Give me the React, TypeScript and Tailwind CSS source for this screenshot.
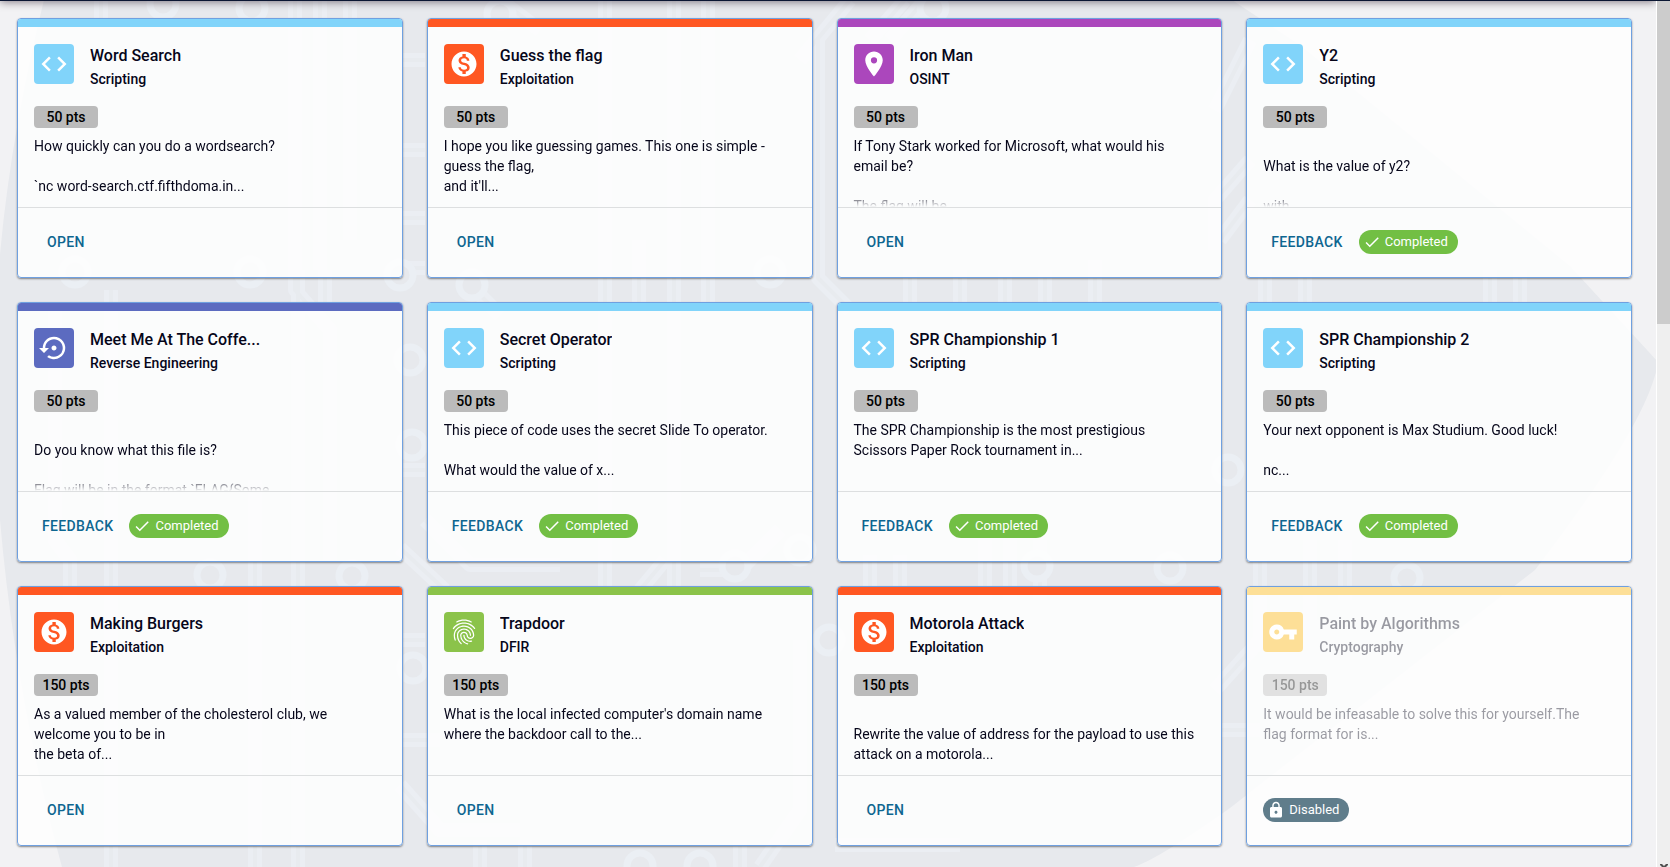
import type { ReactNode } from "react";
import type { IconType } from "react-icons";
import {
  MdCheck,
  MdCode,
  MdFingerprint,
  MdLock,
  MdMonetizationOn,
  MdPlace,
  MdSettingsBackupRestore,
  MdVpnKey,
} from "react-icons/md";

type Category =
  | "Scripting"
  | "Exploitation"
  | "OSINT"
  | "Reverse Engineering"
  | "DFIR"
  | "Cryptography";

type Status = "open" | "completed" | "disabled";

interface Challenge {
  title: string;
  category: Category;
  points: number;
  text: string;
  status: Status;
}

const categories: Record<Category, { color: string; icon: IconType }> = {
  Scripting: { color: "bg-[#81d4fa]", icon: MdCode },
  Exploitation: { color: "bg-[#ff5722]", icon: MdMonetizationOn },
  OSINT: { color: "bg-[#ab47bc]", icon: MdPlace },
  "Reverse Engineering": { color: "bg-[#5c6bc0]", icon: MdSettingsBackupRestore },
  DFIR: { color: "bg-[#8bc34a]", icon: MdFingerprint },
  Cryptography: { color: "bg-[#fddf97]", icon: MdVpnKey },
};

const challenges: Challenge[] = [
  {
    title: "Word Search",
    category: "Scripting",
    points: 50,
    text: "How quickly can you do a wordsearch?\n\n`nc word-search.ctf.fifthdoma.in...",
    status: "open",
  },
  {
    title: "Guess the flag",
    category: "Exploitation",
    points: 50,
    text: "I hope you like guessing games. This one is simple - guess the flag,\nand it'll...",
    status: "open",
  },
  {
    title: "Iron Man",
    category: "OSINT",
    points: 50,
    text: "If Tony Stark worked for Microsoft, what would his email be?\n\nThe flag will be",
    status: "open",
  },
  {
    title: "Y2",
    category: "Scripting",
    points: 50,
    text: "\nWhat is the value of y2?\n\nwith",
    status: "completed",
  },
  {
    title: "Meet Me At The Coffe...",
    category: "Reverse Engineering",
    points: 50,
    text: "\nDo you know what this file is?\n\nFlag will be in the format `FLAG{Some...",
    status: "completed",
  },
  {
    title: "Secret Operator",
    category: "Scripting",
    points: 50,
    text: "This piece of code uses the secret Slide To operator.\n\nWhat would the value of x...",
    status: "completed",
  },
  {
    title: "SPR Championship 1",
    category: "Scripting",
    points: 50,
    text: "The SPR Championship is the most prestigious Scissors Paper Rock tournament in...",
    status: "completed",
  },
  {
    title: "SPR Championship 2",
    category: "Scripting",
    points: 50,
    text: "Your next opponent is Max Studium. Good luck!\n\nnc...",
    status: "completed",
  },
  {
    title: "Making Burgers",
    category: "Exploitation",
    points: 150,
    text: "As a valued member of the cholesterol club, we welcome you to be in\nthe beta of...",
    status: "open",
  },
  {
    title: "Trapdoor",
    category: "DFIR",
    points: 150,
    text: "What is the local infected computer's domain name where the backdoor call to the...",
    status: "open",
  },
  {
    title: "Motorola Attack",
    category: "Exploitation",
    points: 150,
    text: "\nRewrite the value of address for the payload to use this attack on a motorola...",
    status: "open",
  },
  {
    title: "Paint by Algorithms",
    category: "Cryptography",
    points: 150,
    text: "It would be infeasable to solve this for yourself.The\nflag format for is...",
    status: "disabled",
  },
];

function ActionButton({ children }: { children: ReactNode }) {
  return (
    <button
      type="button"
      className="h-9 min-w-16 rounded px-2 text-sm font-medium uppercase tracking-wide text-[#0e6690] hover:bg-sky-50"
    >
      {children}
    </button>
  );
}

function Chip({ icon: Icon, color, children }: { icon: IconType; color: string; children: ReactNode }) {
  return (
    <span
      className={`inline-flex h-6 items-center gap-1 rounded-full pr-2.5 pl-1 text-[13px] text-white ${color}`}
    >
      <Icon size={18} aria-hidden />
      {children}
    </span>
  );
}

function ChallengeCard({ challenge }: { challenge: Challenge }) {
  const { title, category, points, text, status } = challenge;
  const { color, icon: Icon } = categories[category];
  const faded = status === "disabled" ? "opacity-40" : "";

  return (
    <article className="flex flex-col overflow-hidden rounded border border-[#6fa0e0] bg-white/85 shadow-[0_1px_2px_rgba(0,0,0,0.45)]">
      <div className={`h-2 ${color}`} />
      <header className="flex gap-4 px-4 pt-[17px]">
        <span className={`flex size-10 shrink-0 items-center justify-center rounded text-white ${color}`}>
          <Icon size={30} aria-hidden />
        </span>
        <div className={`min-w-0 ${faded}`}>
          <h2 className="truncate text-base font-medium leading-6">{title}</h2>
          <p className="text-sm font-medium leading-[22px]">{category}</p>
        </div>
      </header>
      <div className={`mt-4 px-4 ${faded}`}>
        <span className="flex h-[22px] w-16 items-center justify-center rounded bg-[#bbbbbb] text-sm font-medium text-black">
          {points} pts
        </span>
      </div>
      <p
        className={`mt-2 h-[71px] overflow-hidden whitespace-pre-line pr-[22px] pl-4 text-sm leading-5 [mask-image:linear-gradient(to_bottom,black_56px,transparent_71px)] ${faded}`}
      >
        {text}
      </p>
      <footer className="flex h-[70px] items-center gap-2 border-t border-[#dddfe0] px-4 pb-0.5">
        {status === "open" && <ActionButton>Open</ActionButton>}
        {status === "completed" && (
          <>
            <ActionButton>Feedback</ActionButton>
            <Chip icon={MdCheck} color="bg-[#72bf44]">
              Completed
            </Chip>
          </>
        )}
        {status === "disabled" && (
          <Chip icon={MdLock} color="bg-[#607d8b]">
            Disabled
          </Chip>
        )}
      </footer>
    </article>
  );
}

const traces = [
  "M101 0 V18 M295 0 V290 L330 330 V560 M320 0 V270 M350 0 V240",
  "M55 310 V540 L70 560 V600 M111 290 V867 M255 480 V867 M298 270 V867 M325 270 V310",
  "M400 60 H425 M400 150 H425 M400 218 H425 M400 268 H425 M400 470 H425 M400 640 H425 M400 785 L440 830 H520",
  "M400 548 L445 590 M425 520 L470 565 H560 M500 0 L540 30 M605 0 V600 M639 240 V310 M674 0 V600 M708 0 V310 M475 290 L500 315",
  "M850 0 L800 60 M818 40 V278 L850 310 M665 560 L640 590 M700 570 H740 L780 530 M760 867 L800 810 V640",
  "M905 0 L870 40 M925 0 L890 40 M910 270 V310 M960 270 V310 M1005 270 V310 M1045 270 V310 M1095 260 V310",
  "M1250 40 L1215 110 M1250 160 L1215 200 V250 M1250 200 L1220 240 M1265 270 V310 M1305 270 V310 M1490 270 V310 M1520 270 V310",
  "M870 555 V590 M900 555 V590 M985 540 V600 M1010 540 V600 M1040 540 V600 M1215 690 L1260 640 V560 M1310 540 V620 M1345 540 V600",
  "M480 840 V867 M525 840 V867 M740 840 V867 M835 845 H960 M400 740 H440 M1220 730 H1260",
].join(" ");

const pads: [number, number][] = [
  [163, 4], [252, 8], [500, 14], [75, 272], [250, 272], [472, 285], [400, 275], [770, 272],
  [210, 575], [352, 576], [735, 566], [800, 550], [410, 360], [412, 445], [413, 668], [829, 640],
  [933, 8], [1037, 566], [1170, 568], [1228, 470], [1407, 578], [640, 866], [700, 866],
];

function CircuitBackground() {
  return (
    <svg
      className="absolute inset-0 size-full"
      viewBox="0 0 1656 867"
      preserveAspectRatio="xMidYMid slice"
      fill="none"
      aria-hidden
    >
      <path
        d="M44 0 C14 120 -8 260 -6 400 C-4 560 24 730 62 867 H1134 Q1160 858 1230 808 L1535 570 Q1650 420 1658 362 L1570 266 L1300 45 L1232 0Z"
        fill="#e7e9ed"
      />
      <path d={traces} stroke="#ebeef3" strokeWidth="14" strokeLinejoin="round" />
      <path d={traces} stroke="#e8ebef" strokeWidth="4" strokeLinejoin="round" />
      <g stroke="#ebeff4" strokeWidth="7" fill="#e7e9ed">
        {pads.map(([x, y]) => (
          <circle key={`${x}-${y}`} cx={x} cy={y} r="13" />
        ))}
      </g>
    </svg>
  );
}

function ScrollRail() {
  return (
    <div className="relative w-[14px] shrink-0 border-l border-white bg-[#efefef]" aria-hidden>
      <div className="h-[324px] bg-[#cccccc]" />
      <svg className="absolute bottom-0 left-[3px]" width="8" height="3" viewBox="0 0 8 3" fill="#505050">
        <path d="M0 0 H2 L4 2 L6 0 H8 V1 L6 3 H2 L0 1Z" />
      </svg>
    </div>
  );
}

export default function App() {
  return (
    <div className="flex min-h-screen bg-[#f2f2f4] font-[Roboto,sans-serif] text-[#06061a]">
      <main className="relative min-w-0 flex-1 overflow-hidden">
        <CircuitBackground />
        <div className="relative grid grid-cols-1 gap-6 pt-[18px] pr-6 pb-5 pl-[17px] md:grid-cols-2 xl:grid-cols-4">
          {challenges.map((challenge) => (
            <ChallengeCard key={challenge.title} challenge={challenge} />
          ))}
        </div>
        <div className="absolute inset-x-0 -top-4 h-[17px] shadow-[0_1px_8px_rgba(20,0,20,0.5)]" />
      </main>
      <ScrollRail />
      <div className="absolute inset-x-0 top-0 h-px bg-[#0a1633]" />
    </div>
  );
}
